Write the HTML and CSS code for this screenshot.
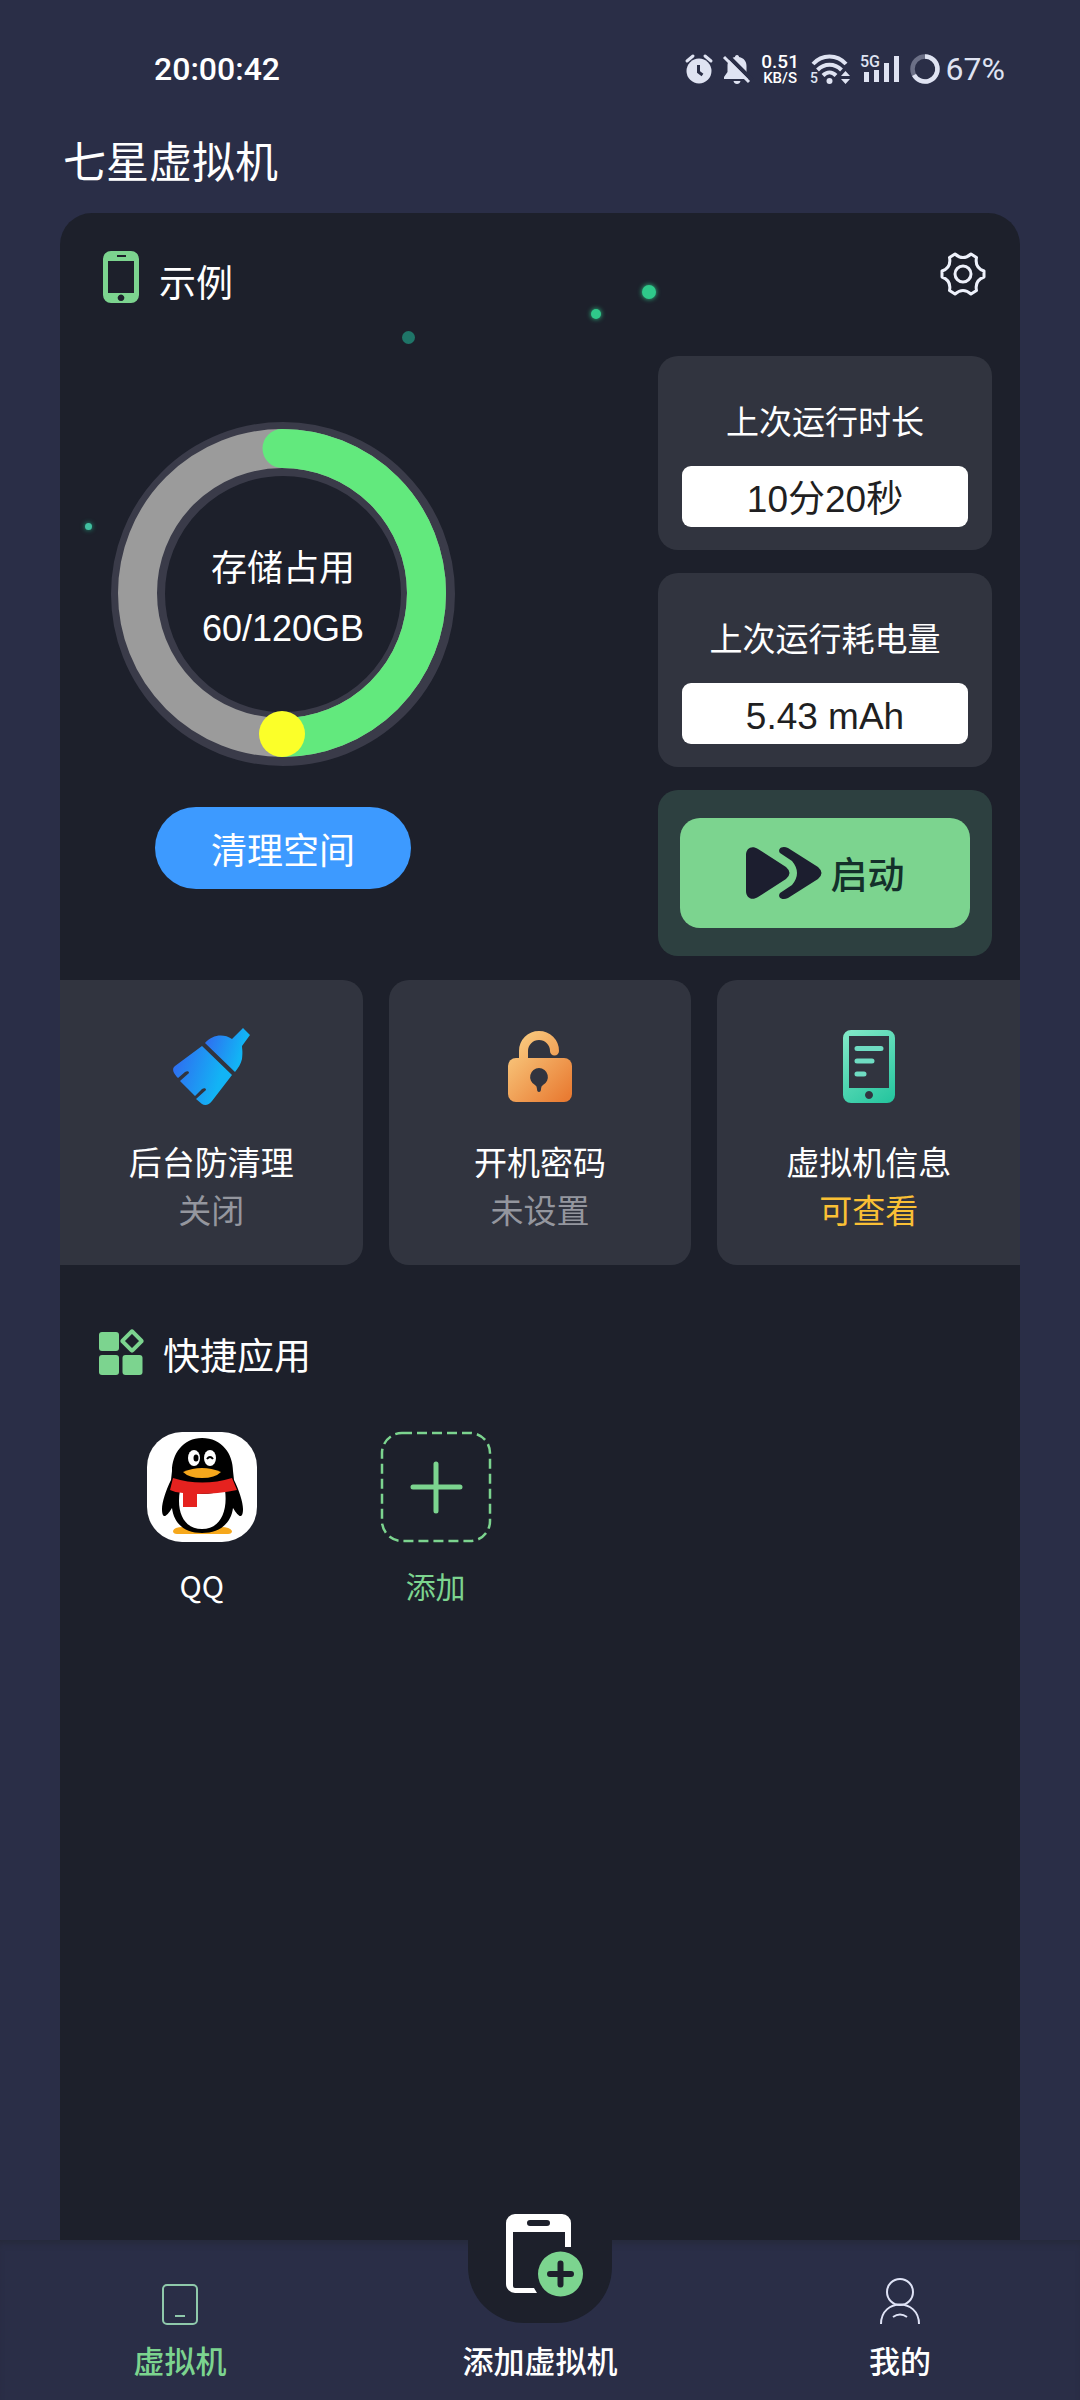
FILE: index.html
```html
<!DOCTYPE html>
<html lang="zh-CN">
<head>
  <meta charset="UTF-8">
  <meta name="viewport" content="width=device-width, initial-scale=1.0">
  <title>七星虚拟机</title>
  <link rel="stylesheet" href="styles.css">
</head>
<body>
  <div class="status-bar">
    <span class="clock">20:00:42</span>
    <div class="status-icons">
      <svg class="alarm" width="28" height="30" viewBox="0 0 28 30">
        <path d="M2 7l6-5M26 7l-6-5" stroke="#dfe3f2" stroke-width="3" stroke-linecap="round"/>
        <circle cx="14" cy="17" r="12.5" fill="#dfe3f2"/>
        <path d="M13.5 11v7l4 3" fill="none" stroke="#2a2e47" stroke-width="3"/>
      </svg>
      <svg class="bell" width="28" height="30" viewBox="0 0 28 30">
        <path d="M14 1c1.500 0 2 1 2 2 5 1 7.500 4.500 7.500 9v6l3 5v2H1v-2l3.500-5v-6c0-4.500 2.500-8 7.500-9 0-1 .5-2 2-2zM10.500 27h7c-.5 4-6.500 4-7 0z" fill="#dfe3f2"/>
        <path d="M3 0l26 26" stroke="#2a2e47" stroke-width="4"/>
        <path d="M1 3l25 25" stroke="#dfe3f2" stroke-width="3"/>
      </svg>
      <span class="speed"><b>0.51</b><small>KB/S</small></span>
      <svg class="wifi" width="40" height="31" viewBox="0 0 40 31">
        <g fill="none" stroke="#dfe3f2" stroke-width="4">
          <path d="M3 10c9-10 24-10 33 0"/>
          <path d="M7.500 16c7-7 17-7 24 0"/>
          <path d="M13 21.500c4-4 9-4 13 0"/>
        </g>
        <circle cx="19.500" cy="27" r="3" fill="#dfe3f2"/>
        <path d="M31 22l4.500-5 4.500 5zM31 25l4.500 5 4.500-5z" fill="#dfe3f2"/>
        <text x="0" y="29" font-size="14" font-weight="500" fill="#dfe3f2">5</text>
      </svg>
      <svg class="signal" width="40" height="30" viewBox="0 0 40 30">
        <text x="0" y="13" font-size="16" font-weight="500" fill="#dfe3f2">5G</text>
        <path d="M4 18h5v10H4zM14 16h5v12h-5zM24 9h5v19h-5zM34 2h5v26h-5z" fill="#dfe3f2"/>
      </svg>
      <svg class="battery" width="30" height="30" viewBox="0 0 30 30">
        <circle cx="15" cy="15" r="12.500" fill="none" stroke="#6c7087" stroke-width="4.500"/>
        <path d="M15 2.500a12.500 12.500 0 1 1-11 18.500" fill="none" stroke="#dfe3f2" stroke-width="4.500"/>
      </svg>
      <span class="percent">67%</span>
    </div>
  </div>

  <h1 class="app-title">七星虚拟机</h1>

  <main class="panel">
    <i class="dot dot-a"></i>
    <i class="dot dot-b"></i>
    <i class="dot dot-c"></i>
    <i class="dot dot-d"></i>

    <div class="panel-head">
      <svg width="36" height="52" viewBox="0 0 36 52">
        <path fill="#7cd48f" fill-rule="evenodd" d="M8 0h20a8 8 0 0 1 8 8v36a8 8 0 0 1-8 8H8a8 8 0 0 1-8-8V8a8 8 0 0 1 8-8zM5 10v32h26V10zM14 4v2h9V4zM18 43.500a3.300 3.300 0 1 0 .01 0z"/>
      </svg>
      <h2>示例</h2>
      <button class="settings" aria-label="设置">
        <svg width="46" height="46" viewBox="0 0 46 46" fill="none" stroke="#eef1fb" stroke-width="3" stroke-linejoin="round">
          <path d="M44 20v6Q34.500 29.500 36.500 39.500L31 43Q23 36 15 43L9.500 39.500Q11.500 29.500 2 26v-6Q11.500 16.500 9.500 6.500L15 3Q23 10 31 3L36.500 6.500Q34.500 16.500 44 20z"/>
          <circle cx="23" cy="23" r="8"/>
        </svg>
      </button>
    </div>

    <section class="overview">
      <div class="storage">
        <div class="ring">
          <svg width="344" height="344" viewBox="0 0 344 344" fill="none">
            <circle cx="172" cy="172" r="145" stroke="#3a3b49" stroke-width="54"/>
            <circle cx="171" cy="171" r="144.500" stroke="#9b9b9b" stroke-width="39"/>
            <path d="M171 26.500a144.500 144.500 0 0 1 0 289" stroke="#62e97d" stroke-width="39" stroke-linecap="round"/>
            <circle cx="171" cy="312" r="23" fill="#fbff29"/>
          </svg>
          <div class="ring-text">
            <span>存储占用</span>
            <span class="ring-value">60/120GB</span>
          </div>
        </div>
        <button class="clean-btn">清理空间</button>
      </div>

      <div class="stats">
        <div class="stat-card">
          <span>上次运行时长</span>
          <strong>10分20秒</strong>
        </div>
        <div class="stat-card">
          <span>上次运行耗电量</span>
          <strong>5.43 mAh</strong>
        </div>
        <div class="start-card">
          <button class="start-btn">
            <svg width="76" height="52" viewBox="0 0 76 52" fill="#1c1e2f">
              <path d="M0 8C0 1 6-2 12 2l28 18q7 6 0 12L12 50C6 54 0 51 0 44z"/>
              <path d="M34 6c-3-4 2-8 8-5l30 19q7 6 0 12L42 51c-6 3-11-1-8-5l12-8q10-12 0-24z"/>
            </svg>
            启动
          </button>
        </div>
      </div>
    </section>

    <section class="features">
      <button class="feature">
        <svg width="78" height="78" viewBox="0 0 78 78">
          <defs>
            <linearGradient id="blue" x1="0" y1="0.300" x2="1" y2="0.600">
              <stop offset="0" stop-color="#2f6df0"/>
              <stop offset="0.800" stop-color="#12b4f5"/>
            </linearGradient>
          </defs>
          <path fill="url(#blue)" d="M71 1l7 7-8 11c0 3 1 5 0 13-1 5-4 9-7 13L33 16c7-8 18-10 27-4z"/>
          <path fill="url(#blue)" d="M30 19l30 29-20 26c-3 4-7 5-10 3l-6-5 10-9c0-2-2-2-4-1l-7 7L8 54l9-8c0-2-2-2-4-1l-7 6c-4-4-7-9-3-12z"/>
        </svg>
        <span>后台防清理</span>
        <em>关闭</em>
      </button>
      <button class="feature">
        <svg width="64" height="78" viewBox="0 -4 64 78">
          <defs>
            <linearGradient id="orange" gradientUnits="userSpaceOnUse" x1="4" y1="10" x2="60" y2="66">
              <stop offset="0" stop-color="#f9cb80"/>
              <stop offset="1" stop-color="#e97c33"/>
            </linearGradient>
          </defs>
          <path d="M15.500 32V20a15.500 15.500 0 0 1 31 0" fill="none" stroke="url(#orange)" stroke-width="9" stroke-linecap="round"/>
          <rect y="27" width="64" height="44" rx="8" fill="url(#orange)"/>
          <path d="M31 37a9 9 0 0 0-4 17q2 1 2 4t2 3q2 0 2-3t2-4a9 9 0 0 0-4-17z" fill="#31343f"/>
        </svg>
        <span>开机密码</span>
        <em>未设置</em>
      </button>
      <button class="feature">
        <svg width="52" height="78" viewBox="0 -3 52 78">
          <defs>
            <linearGradient id="teal" gradientUnits="userSpaceOnUse" x1="0" y1="0" x2="52" y2="73">
              <stop offset="0" stop-color="#84e9c8"/>
              <stop offset="1" stop-color="#22c49d"/>
            </linearGradient>
          </defs>
          <path fill="url(#teal)" fill-rule="evenodd" d="M8 0h36a8 8 0 0 1 8 8v57a8 8 0 0 1-8 8H8a8 8 0 0 1-8-8V8a8 8 0 0 1 8-8zM6 6v52h40V6zM26 61a4 4 0 1 0 .01 0z"/>
          <path d="M14 18.500h24M14 31h15M14 44h7" stroke="#6fdcc2" stroke-width="5" stroke-linecap="round"/>
        </svg>
        <span>虚拟机信息</span>
        <em class="on">可查看</em>
      </button>
    </section>

    <section class="shortcuts">
      <div class="section-title">
        <svg width="45" height="45" viewBox="0 0 45 45">
          <g fill="#7cd48f">
            <rect y="2" width="20" height="19" rx="3"/>
            <rect y="25" width="20" height="20" rx="3"/>
            <rect x="23.500" y="25" width="20" height="20" rx="3"/>
          </g>
          <rect x="26" y="4" width="14" height="14" rx="1" transform="rotate(45 33 11)" fill="none" stroke="#7cd48f" stroke-width="4"/>
        </svg>
        <h2>快捷应用</h2>
      </div>
      <div class="app-grid">
        <button class="app">
          <svg width="110" height="110" viewBox="0 0 110 110">
            <rect width="110" height="110" rx="35" fill="#fff"/>
            <path d="M26 99q1-4 10-4h38q9 0 11 4 0 3-4 3H30q-4 0-4-3z" fill="#f6a81c"/>
            <path d="M55 6c20 0 31 16 31 33l1 9c5 10 9 22 9 29 0 10-4 9-10-1C84 92 72 101 55 101S27 92 25 76c-6 10-10 11-10 1 0-7 4-19 9-29l1-9C25 22 36 6 55 6z"/>
            <path d="M33 58q22 8 45 0c3 22-5 39-23 39S29 80 33 58z" fill="#fff"/>
            <path d="M26 46q29 9 59 0l5 12q-19 4-40 4v13H36V61q-7 0-13-3z" fill="#e5221f"/>
            <ellipse cx="47" cy="26" rx="6" ry="8" fill="#fff"/>
            <ellipse cx="63" cy="26" rx="6" ry="8" fill="#fff"/>
            <ellipse cx="49" cy="26" rx="2.500" ry="3.500"/>
            <path d="M60 27q3-4 6 0" fill="none" stroke="#000" stroke-width="2"/>
            <path d="M36 40q19-8 38 0-6 6-19 6t-19-6z" fill="#f6a81c"/>
          </svg>
          <span>QQ</span>
        </button>
        <button class="app add">
          <svg width="110" height="110" viewBox="0 0 110 110" fill="none" stroke="#7cd48f">
            <rect x="1" y="1" width="108" height="108" rx="20" stroke-width="2.500" stroke-dasharray="10 5"/>
            <path d="M55 32v47M32 55h47" stroke-width="5" stroke-linecap="round"/>
          </svg>
          <span>添加</span>
        </button>
      </div>
    </section>
  </main>

  <nav class="tab-bar">
    <a class="active" href="#">
      <svg width="36" height="41" viewBox="0 0 36 41" fill="none" stroke="#8fc9ab" stroke-width="2">
        <rect x="1" y="1" width="34" height="39" rx="4"/>
        <path d="M13 32h10"/>
      </svg>
      虚拟机
    </a>
    <a class="add-vm" href="#">
      <span class="add-bg">
        <svg width="77" height="83" viewBox="0 0 77 83">
          <path fill="#fff" fill-rule="evenodd" d="M9 0h47a9 9 0 0 1 9 9v24h-6V18H7v54q0 2 2 2h19l3 5H9a9 9 0 0 1-9-9V9a9 9 0 0 1 9-9zM24 6a3 3 0 0 0 0 6h17a3 3 0 0 0 0-6z"/>
          <circle cx="54.500" cy="60" r="22.500" fill="#7cd48f"/>
          <path d="M54.500 49.500v21M44 60h21" stroke="#1d202b" stroke-width="6" stroke-linecap="round"/>
        </svg>
      </span>
      添加虚拟机
    </a>
    <a href="#">
      <svg width="40" height="47" viewBox="0 0 40 47" fill="none" stroke="#dfe3f6" stroke-width="2">
        <circle cx="20" cy="14" r="13"/>
        <path d="M1 46C1 20 39 20 39 46M13 39q7-5 14 0"/>
      </svg>
      我的
    </a>
  </nav>
</body>
</html>
```
FILE: styles.css
```css
* { box-sizing: border-box; margin: 0; padding: 0; }
body { font-family: "Noto Sans CJK SC", "Noto Sans", sans-serif; background: #2a2e47; color: #fff; min-height: 100vh; display: flex; flex-direction: column; }
button { font: inherit; color: inherit; background: none; border: none; cursor: pointer; }
svg { display: block; flex-shrink: 0; overflow: visible; }
h1, h2, em, strong { font-weight: 400; font-style: normal; }

/* status bar */
.status-bar { display: flex; justify-content: space-between; align-items: center; height: 44px; margin-top: 47px; padding: 0 75px 0 154px; font-family: Roboto, sans-serif; font-size: 32px; }
.clock { font-weight: 500; }
.status-icons { display: flex; align-items: center; gap: 10px; }
.speed { display: flex; flex-direction: column; align-items: center; width: 39px; font-size: 19px; line-height: 19px; }
.speed b { font-weight: 500; }
.speed small { font-size: 15px; line-height: 15px; font-weight: 500; }
.battery { margin-right: -4px; }
.percent { color: #dfe3f2; }

.app-title { font-size: 43px; line-height: 60px; margin: 38px 63px 24px; }

/* main panel */
.panel { position: relative; flex: 1; margin: 0 60px; background: #1d202b; border-radius: 32px 32px 0 0; overflow: hidden; }
.panel-head { display: flex; align-items: flex-start; padding: 38px 34px 0 43px; }
.panel-head h2 { font-size: 37px; line-height: 60px; margin-left: 20px; }
.settings { margin-left: auto; }

.dot { position: absolute; border-radius: 50%; }
.dot-a { left: 342px; top: 118px; width: 13px; height: 13px; background: #1f7568; }
.dot-b { left: 582px; top: 72px; width: 14px; height: 14px; background: #2fc98a; box-shadow: 0 0 5px #2fc98a; }
.dot-c { left: 531px; top: 96px; width: 10px; height: 10px; background: #2fc98a; box-shadow: 0 0 5px #2fc98a; }
.dot-d { left: 25px; top: 310px; width: 7px; height: 7px; background: #41bfa0; box-shadow: 0 0 5px #20a07c; }

.overview { display: flex; justify-content: space-between; padding: 0 28px 0 51px; margin-top: 45px; }
.storage { display: flex; flex-direction: column; align-items: center; padding-top: 66px; }
.ring { display: grid; place-items: center; }
.ring > * { grid-area: 1 / 1; }
.ring-text { display: flex; flex-direction: column; align-items: center; padding-top: 6px; font-size: 36px; line-height: 64px; }
.ring-value { font-family: "Liberation Sans", sans-serif; }
.clean-btn { width: 256px; height: 82px; margin-top: 41px; border-radius: 41px; background: #3d9aff; font-size: 36px; }

.stats { display: flex; flex-direction: column; gap: 23px; width: 334px; }
.stat-card { display: flex; flex-direction: column; gap: 24px; padding: 42px 24px 23px; border-radius: 20px; background: #31343f; text-align: center; }
.stat-card span { font-size: 33px; line-height: 44px; }
.stat-card strong { background: #fff; color: #1f1f22; border-radius: 9px; font-family: "Liberation Sans", "Noto Sans CJK SC", sans-serif; font-size: 37px; line-height: 55px; padding-top: 6px; }
.start-card { padding: 28px 22px; border-radius: 20px; background: #2d4040; }
.start-btn { display: flex; align-items: center; justify-content: center; gap: 9px; width: 100%; height: 110px; border-radius: 20px; background: #7cd48f; color: #14302b; font-size: 37px; font-weight: 500; }

.features { display: grid; grid-template-columns: repeat(3, 1fr); gap: 26px; margin-top: 24px; }
.feature { display: flex; flex-direction: column; align-items: center; padding: 47px 0 32px; border-radius: 20px; background: #31343f; font-size: 33px; line-height: 48px; }
.feature:first-child { border-radius: 0 20px 20px 0; }
.feature:last-child { border-radius: 20px 0 0 20px; }
.feature span { margin-top: 32px; }
.feature em { color: #94969e; }
.feature .on { color: #fac035; }

.shortcuts { padding: 65px 0 60px; }
.section-title { display: flex; align-items: flex-start; gap: 19px; padding-left: 39px; }
.section-title h2 { font-size: 37px; line-height: 49px; }
.app-grid { display: grid; grid-template-columns: repeat(4, 1fr); margin-top: 53px; padding-left: 25px; }
.app { display: flex; flex-direction: column; align-items: center; gap: 21px; font-size: 30px; line-height: 44px; }
.add { color: #7cd48f; }

/* bottom tabs */
.tab-bar { display: flex; height: 160px; padding-bottom: 20px; background: #2a2e47; box-shadow: inset 0 6px 6px -3px #262a3a; }
.tab-bar a { position: relative; flex: 1; display: flex; flex-direction: column; align-items: center; justify-content: flex-end; gap: 15px; color: #fff; font-size: 31px; font-weight: 500; line-height: 40px; text-decoration: none; }
.tab-bar .active { color: #7cd48f; }
.add-bg { position: absolute; top: -26px; left: 50%; width: 144px; height: 109px; margin-left: -72px; padding-left: 38px; background: #1d202b; border-radius: 0 0 56px 56px; }
```
